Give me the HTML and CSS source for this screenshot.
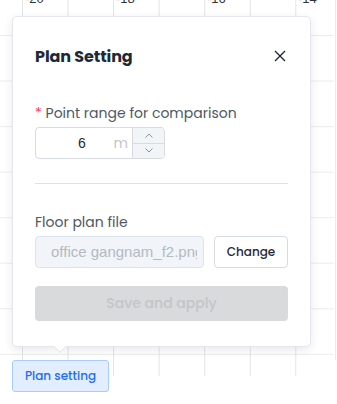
FILE: index.html
```html
<!DOCTYPE html>
<html>
<head>
<meta charset="utf-8">
<link rel="stylesheet" href="styles.css">
</head>
<body>
<div class="stage">
  <div class="grid">
    <span class="axis-label" style="left:25px">-20</span>
    <span class="axis-label" style="left:116px">-18</span>
    <span class="axis-label" style="left:207px">-16</span>
    <span class="axis-label" style="left:298px">-14</span>
  </div>
  <div class="edge"></div>

  <div class="popover">
    <div class="pop-header">
      <h2 class="pop-title">Plan Setting</h2>
      <button class="close-btn" aria-label="Close">
        <svg width="12" height="12" viewBox="0 0 12 12"><path d="M1 1 L11 11 M11 1 L1 11" stroke="#1f2937" stroke-width="1.4" fill="none"/></svg>
      </button>
    </div>

    <div class="field">
      <label class="label"><span class="req">*</span> Point range for comparison</label>
      <div class="num-input">
        <div class="num-body">
          <span class="num-value">6</span>
          <span class="num-suffix">m</span>
        </div>
        <div class="num-handlers">
          <span class="handler">
            <svg width="8" height="5" viewBox="0 0 8 5"><path d="M0.5 4.5 L4 1 L7.5 4.5" stroke="#8a929c" stroke-width="1" fill="none"/></svg>
          </span>
          <span class="handler handler-down">
            <svg width="8" height="5" viewBox="0 0 8 5"><path d="M0.5 0.5 L4 4 L7.5 0.5" stroke="#8a929c" stroke-width="1" fill="none"/></svg>
          </span>
        </div>
      </div>
    </div>

    <div class="divider"></div>

    <div class="field">
      <label class="label">Floor plan file</label>
      <div class="file-row">
        <div class="file-input"><span class="file-text">office gangnam_f2.png</span></div>
        <button class="btn-change">Change</button>
      </div>
    </div>

    <button class="btn-save">Save and apply</button>
    <div class="arrow"></div>
  </div>

  <button class="plan-btn">Plan setting</button>
</div>
</body>
</html>
```

FILE: styles.css
```css
* { box-sizing: border-box; }
html, body { margin: 0; padding: 0; background: #fff; }
body { font-family: "Poppins", "Inter", "Open Sans", sans-serif; width: 337px; height: 404px; overflow: hidden; }

.stage { position: relative; width: 337px; height: 404px; }

.grid {
  position: absolute; left: 0; top: 0; width: 334px; height: 376px;
  background-image:
    linear-gradient(to right, #e4e4e4 1px, transparent 1px),
    linear-gradient(to bottom, #ececec 1px, transparent 1px);
  background-size: 45.55px 100%, 100% 45.55px;
  background-position: 22px 0, 0 35px;
  background-repeat: repeat-x, repeat-y;
  overflow: hidden;
}
.axis-label {
  position: absolute; top: -9px;
  font-family: "Liberation Sans", sans-serif; font-size: 13px; color: #333;
}
.edge { position: absolute; left: 335px; top: 0; width: 1px; height: 360px; background: #f1e9e5; }

.popover {
  position: absolute; left: 12px; top: 16px; width: 299px; height: 331px;
  background: #fff; border: 1px solid #e4e8ee; border-radius: 5px;
  box-shadow: 0 3px 10px rgba(30, 40, 60, 0.10);
  padding: 27px 22px 0 22px;
  display: flex; flex-direction: column;
}
.pop-header { display: flex; align-items: center; justify-content: space-between; height: 24px; }
.pop-title { margin: 0; font-size: 16px; font-weight: 700; color: #1e2937; letter-spacing: -0.1px; }
.close-btn { border: 0; background: none; padding: 0; width: 24px; height: 24px; display: flex; align-items: center; justify-content: center; margin-right: -4px; }

.field { display: flex; flex-direction: column; }
.label { font-size: 14px; line-height: 22px; color: #4f5864; margin-bottom: 3px; }
.req { color: #f5455c; }
.pop-header + .field { margin-top: 34px; }

.num-input {
  width: 130px; height: 32px; display: flex;
  border: 1px solid #d6dce4; border-radius: 4px; overflow: hidden;
}
.num-body { flex: 1; display: flex; align-items: center; position: relative; }
.num-value { position: absolute; left: 42px; font-family: "Liberation Sans", sans-serif; font-size: 14px; color: #1f2937; }
.num-suffix { position: absolute; right: 4px; font-size: 14px; color: #c2c6cc; }
.num-handlers { width: 32px; display: flex; flex-direction: column; border-left: 1px solid #d6dce4; background: #f2f5f8; }
.handler { flex: 1; display: flex; align-items: center; justify-content: center; }
.handler-down { border-top: 1px solid #d6dce4; }

.divider { height: 1px; background: #dde2e8; margin: 24px 0 27px; }

.file-row { display: flex; gap: 10px; }
.file-input {
  width: 169px; height: 32px; border: 1px solid #dde3ea; border-radius: 4px; background: #f1f5f9;
  font-family: "Liberation Sans", sans-serif; font-size: 15px; color: #b4bac2;
  line-height: 30px; padding: 0 6px 0 15px;
}
.file-text { display: block; white-space: nowrap; overflow: hidden; }
.btn-change {
  flex: 1; height: 32px; border: 1px solid #d6dbe2; border-radius: 4px; background: #fff;
  font-family: inherit; font-size: 12px; font-weight: 500; color: #1f2937; padding: 0;
}

.btn-save {
  margin-top: 18px; height: 35px; border: 0; border-radius: 4px; background: #d9dadb;
  font-family: inherit; font-size: 14px; font-weight: 500; color: #c3c5c8; padding: 0;
}

.arrow {
  position: absolute; left: 42px; bottom: -5px; width: 10px; height: 10px;
  background: #fff; transform: rotate(45deg);
  border-right: 1px solid #e4e8ee; border-bottom: 1px solid #e4e8ee;
}

.plan-btn {
  position: absolute; left: 12px; top: 360px; width: 97px; height: 32px;
  background: #e2edff; border: 1px solid #a9cdfb; border-radius: 3px;
  font-family: inherit; font-size: 12px; font-weight: 500; color: #1b6ff0; padding: 0;
}
```
